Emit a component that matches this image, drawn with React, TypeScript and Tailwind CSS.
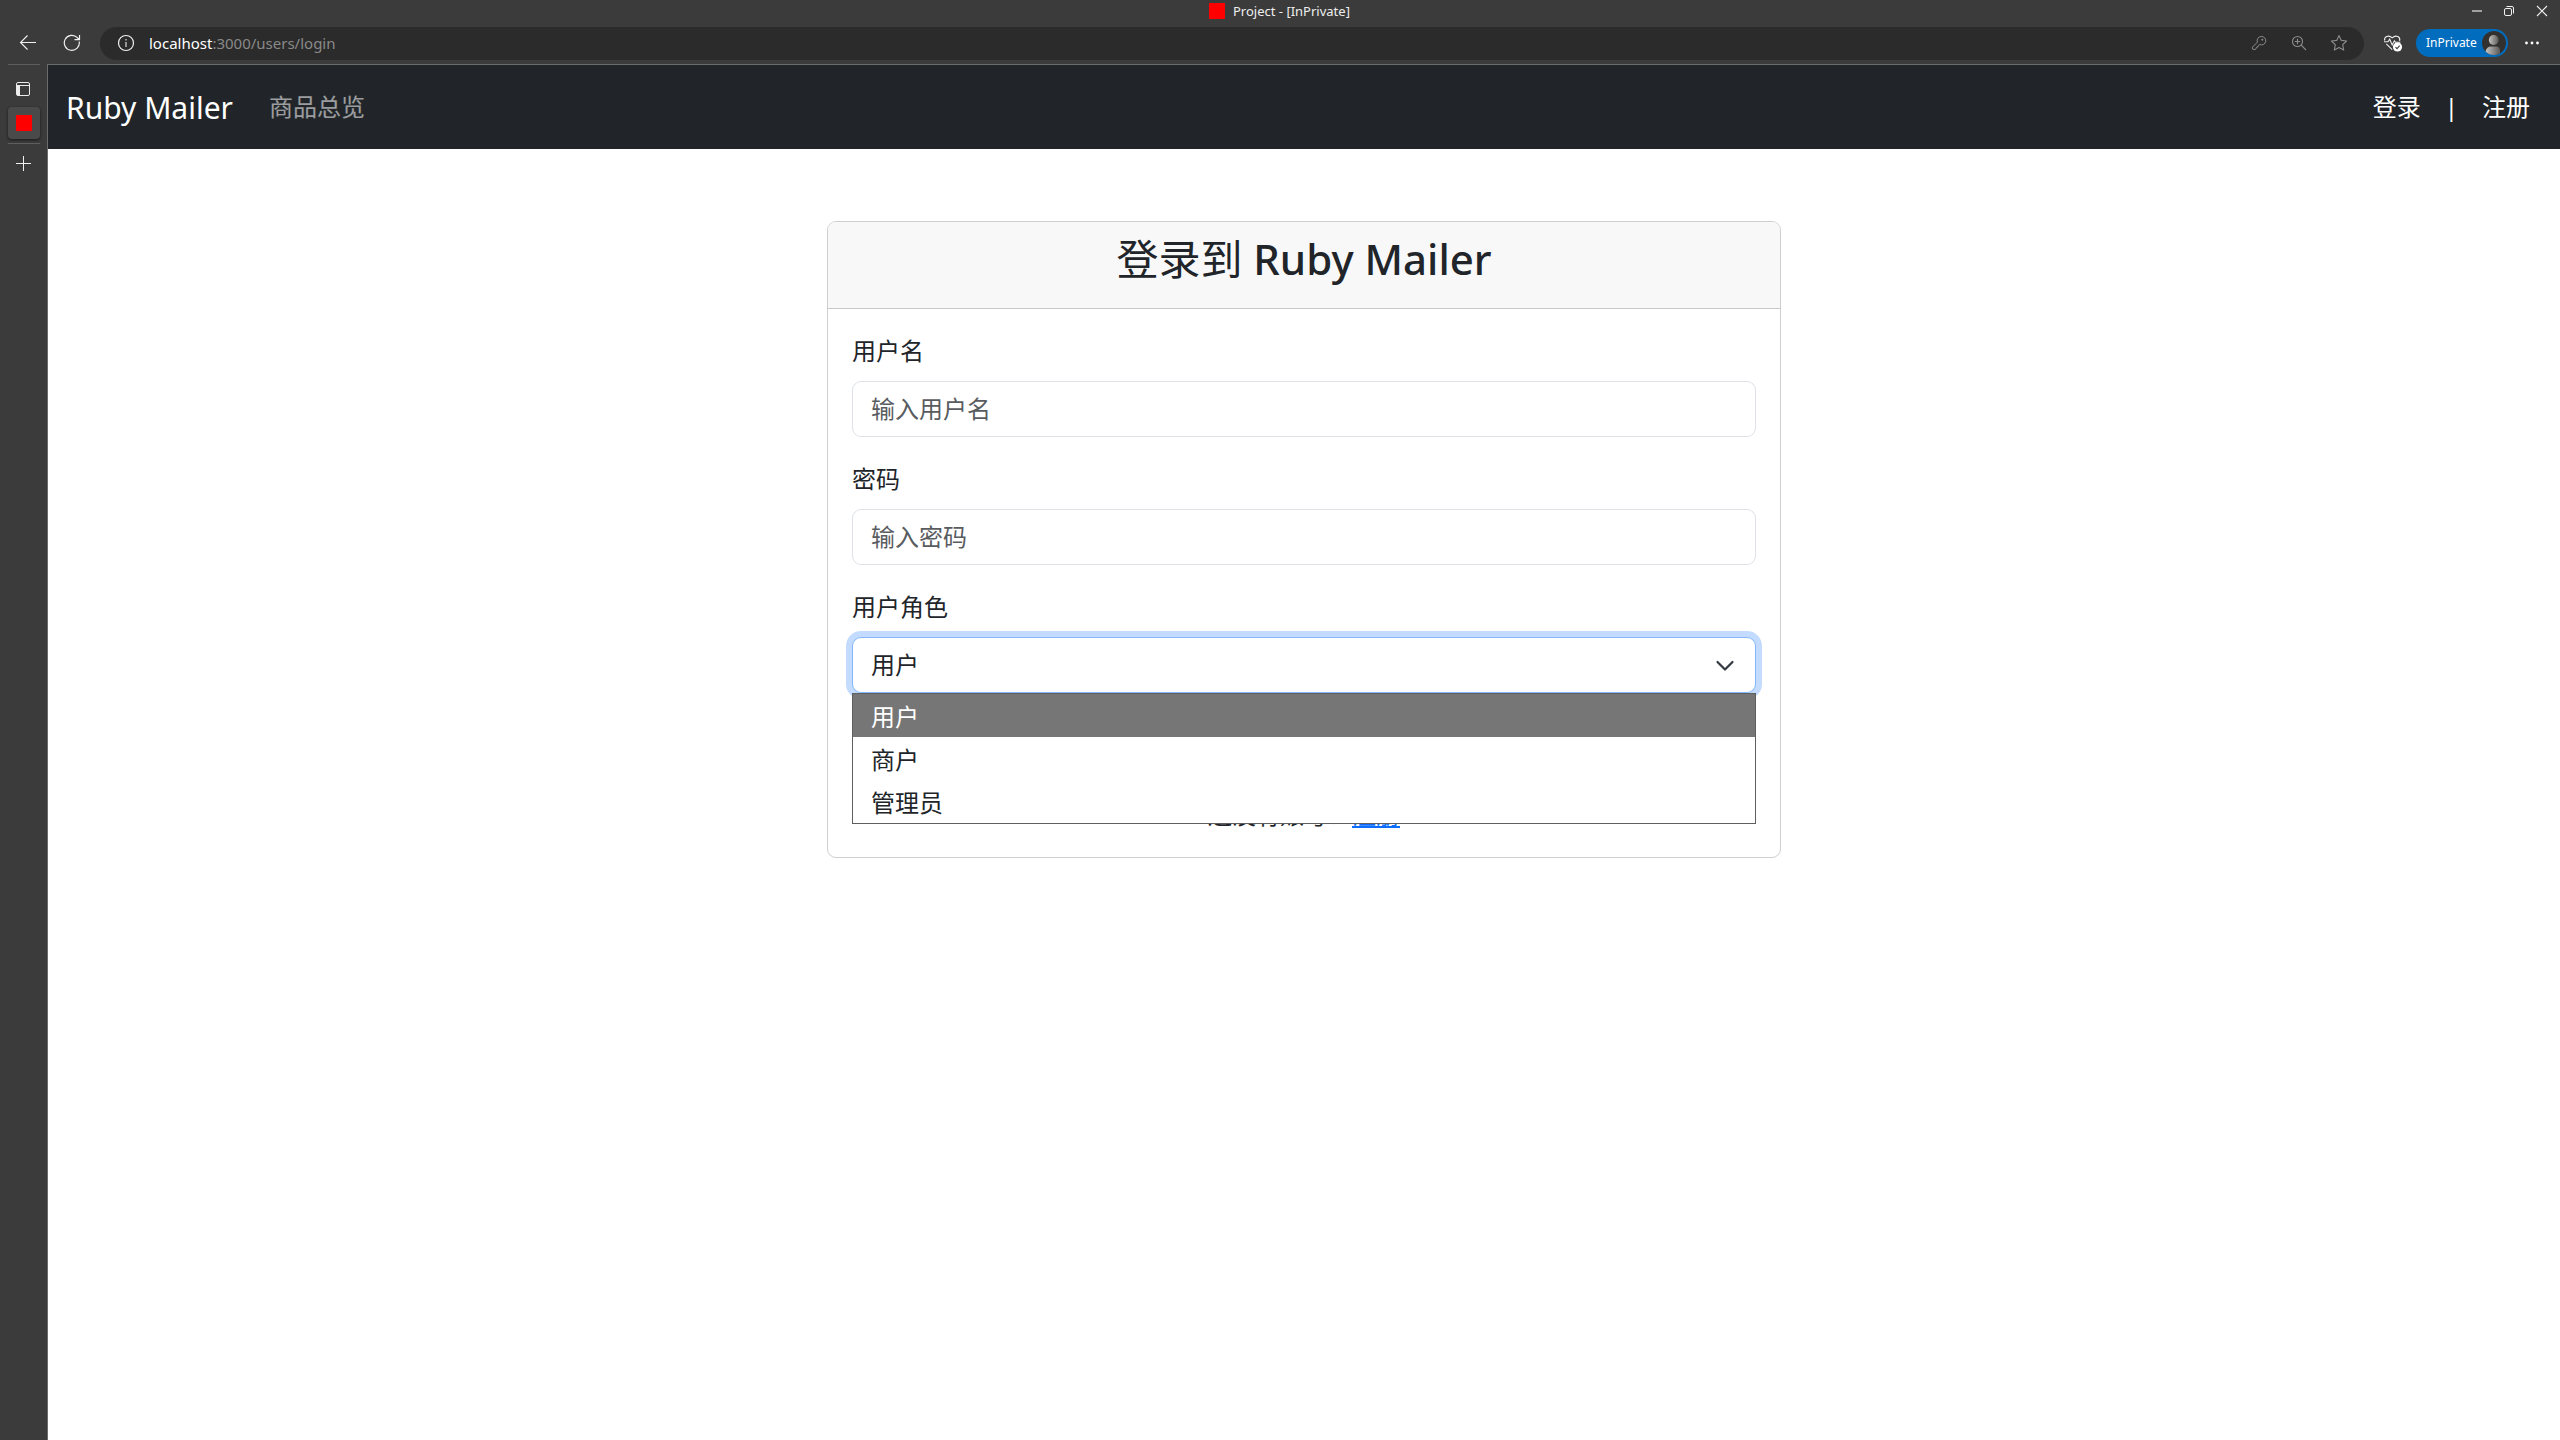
import type { ReactNode } from 'react';

const UI_FONT = "font-['Noto_Sans','Noto_Sans_CJK_SC',sans-serif]";

function TitleBar() {
  return (
    <div className="flex h-[27px] w-full shrink-0 items-start">
      <div className="ml-[1209px] mt-[3px] size-4 bg-[#ff0000]" />
      <span className="ml-2 mt-[2px] text-[13px] leading-[18px] text-[#eeeeee]">Project - [InPrivate]</span>
      <div className="ml-auto mr-[12px] flex">
        <svg className="mr-[20px] mt-[5px]" width="12" height="12" viewBox="0 0 12 12" fill="none">
          <path d="M1 6h10" stroke="#a0a0a0" strokeWidth="2" />
        </svg>
        <svg className="mr-[21px] mt-[5px]" width="12" height="12" viewBox="0 0 12 12" fill="none" stroke="#f0f0f0">
          <rect x="1.5" y="3.5" width="7" height="7" rx="1.5" />
          <path d="M3.5 1.5H9A1.5 1.5 0 0 1 10.500 3V8.500" />
        </svg>
        <svg className="mt-[5px]" width="12" height="12" viewBox="0 0 12 12" fill="none">
          <path d="M1 1l10 10M11 1L1 11" stroke="#f0f0f0" strokeWidth="1.100" />
        </svg>
      </div>
    </div>
  );
}

function Toolbar() {
  return (
    <div className="flex h-[37px] w-full shrink-0 items-start">
      <svg className="ml-[19px] mt-[7px]" width="18" height="18" viewBox="0 0 18 18" fill="none" stroke="#f0f0f0" strokeWidth="1.100">
        <path d="M17 8.500H1.500M8.500 1.500L1.500 8.500l7 7" />
      </svg>
      <svg className="ml-[26px] mt-[7px]" width="18" height="18" viewBox="0 0 18 18" fill="none" stroke="#f0f0f0" strokeWidth="1.200">
        <path d="M16.200 7.500A7.500 7.500 0 1 1 14.300 3.700L16 5.500M16.500 1v4.700h-5" />
      </svg>
      <div className="ml-[19px] flex h-[33px] w-[2264px] items-center rounded-full bg-[#2b2b2b]">
        <svg className="mb-px ml-[17px]" width="18" height="18" viewBox="0 0 18 18" fill="none" stroke="#f0f0f0">
          <circle cx="9" cy="9" r="7.500" strokeWidth="1.200" />
          <path d="M9 8v5M9 5v1.600" stroke="#b0b0b0" strokeWidth="1.600" />
        </svg>
        <span className="mb-px ml-[14px] text-[15px] leading-5 text-[#898989]">
          <span className="text-white">localhost</span>:3000/users/login
        </span>
        <svg className="mb-px ml-auto mr-[24px]" width="16" height="16" viewBox="0 0 16 16" fill="none" stroke="#8c8c8c" strokeLinejoin="round">
          <path d="M10.300 1.500a4.200 4.200 0 1 1-1.500 8L7.500 10.300l-.4 1.500-1.300.3-.8 1.700-1.200.8-2.100-.4-.3-2L6.400 7.200A4.200 4.200 0 0 1 10.300 1.500z" />
          <circle cx="11.300" cy="4.700" r=".6" fill="#8c8c8c" />
        </svg>
        <svg className="mb-px mr-[23px]" width="16" height="16" viewBox="0 0 16 16" fill="none" stroke="#8c8c8c" strokeWidth="1.100">
          <circle cx="6.500" cy="6.500" r="5" />
          <path d="M10.200 10.200L15 15M6.500 3.800v5.400M3.800 6.500h5.400" />
        </svg>
        <svg className="mb-px mr-[16px]" width="18" height="18" viewBox="0 0 18 18" fill="none" stroke="#8c8c8c" strokeWidth="1.100" strokeLinejoin="round">
          <path d="M9 1.500l2.300 4.900 5.300.6-3.900 3.700 1 5.400L9 13.500l-4.700 2.600 1-5.400L1.400 7l5.300-.6z" />
        </svg>
      </div>
      <svg className="ml-[19px] mt-[7px]" width="20" height="19" viewBox="0 0 20 19" fill="none" stroke="#ececec" strokeWidth="1.100">
        <path d="M1.700 6.500C.8 3 5.500.2 9.200 3.800 13 .2 17.700 3 16.600 6.800M3.300 9.800l5.900 5.800" />
        <path d="M1 7.800h4l1.700-2.600L9.200 11l2.200-4.200 1 1.500h5" />
        <circle cx="14.500" cy="13" r="4.600" fill="#ffffff" stroke="none" />
        <path d="M12.500 13.200l1.500 1.400 2.700-2.900" stroke="#3b3b3b" />
      </svg>
      <div className="ml-[13px] mt-[2px] flex h-7 w-[92px] items-center justify-between rounded-full bg-[#006cbe] pl-[10px] pr-[2px]">
        <span className="text-[12px] leading-4 text-white">InPrivate</span>
        <svg width="24" height="24" viewBox="0 0 24 24">
          <defs>
            <clipPath id="avatar-clip">
              <circle cx="12" cy="12" r="12" />
            </clipPath>
            <linearGradient id="avatar-fill" x1="0" x2="1">
              <stop offset="0" stopColor="#c4c4c4" />
              <stop offset="1" stopColor="#5c5a58" />
            </linearGradient>
          </defs>
          <circle cx="12" cy="12" r="12" fill="#33312f" />
          <g clipPath="url(#avatar-clip)" fill="url(#avatar-fill)">
            <circle cx="11.700" cy="9" r="4.900" />
            <path d="M3.500 24v-3.500C4 17.500 6 15.500 9 15.500h5c2.500 0 4 1.500 4 4V24z" />
          </g>
        </svg>
      </div>
      <svg className="ml-[16px] mt-[14px]" width="16" height="4" viewBox="0 0 16 4" fill="#ffffff">
        <circle cx="2.500" cy="2" r="1.400" />
        <circle cx="8" cy="2" r="1.400" />
        <circle cx="13.500" cy="2" r="1.400" />
      </svg>
    </div>
  );
}

function TabRail() {
  return (
    <aside className="flex w-[47px] shrink-0 flex-col pl-2">
      <div className="h-px w-8 bg-[#5e5e5e]" />
      <svg className="ml-2 mt-[17px]" width="14" height="14" viewBox="0 0 14 14" fill="none" stroke="#ececec">
        <rect x=".5" y=".5" width="13" height="13" rx="1.500" />
        <path d="M.5 3.500h13" />
        <path d="M1 4h3v9.500H1z" fill="#ececec" stroke="none" />
      </svg>
      <div className="mt-[11px] flex size-8 items-center justify-center rounded bg-[#4a4a4a] shadow-[0_1px_3px_rgba(0,0,0,0.6)]">
        <div className="size-4 bg-[#ff0000]" />
      </div>
      <div className="mt-1 h-px w-8 bg-[#5e5e5e]" />
      <svg className="ml-2 mt-[12px]" width="15" height="15" viewBox="0 0 15 15" fill="none" stroke="#f0f0f0">
        <path d="M7.500 0v15M0 7.500h15" />
      </svg>
    </aside>
  );
}

function Navbar() {
  return (
    <nav className="flex h-[84px] items-center bg-[#212529] pl-[18px] pr-[30px] text-[24px] text-white">
      <span className="text-[30px] leading-[45px]">Ruby Mailer</span>
      <span className="ml-[36px] leading-9 text-white/55">商品总览</span>
      <div className="ml-auto flex items-center leading-9">
        <span>登录</span>
        <span className="mx-[24px]">|</span>
        <span>注册</span>
      </div>
    </nav>
  );
}

function Field({ label, children }: { label: string; children: ReactNode }) {
  return (
    <div className="mb-6">
      <div className="mb-3 leading-9">{label}</div>
      {children}
    </div>
  );
}

function TextInput({ placeholder, type }: { placeholder: string; type: string }) {
  return (
    <input
      type={type}
      placeholder={placeholder}
      className="block h-14 w-full rounded-[9px] border border-[#dee2e6] bg-white px-[18px] pb-[10px] pt-[8px] leading-9 placeholder:text-[#595c5f]"
    />
  );
}

function RoleSelect() {
  return (
    <div className="relative">
      <div className="flex h-14 items-center justify-between rounded-[9px] border border-[#86b7fe] bg-white pl-[18px] pr-[18px] leading-9 shadow-[0_0_0_6px_#c2dbff]">
        <span>用户</span>
        <svg className="mb-px" width="24" height="18" viewBox="0 0 16 12" fill="none" stroke="#343a40" strokeWidth="1.500" strokeLinecap="round" strokeLinejoin="round">
          <path d="M3 4l5 5 5-5" />
        </svg>
      </div>
      <ul className="absolute left-0 top-full z-10 w-full border border-[#5f5f5f] bg-white leading-[42px]">
        <li className="h-[43px] bg-[#767676] pl-[18px] pt-[2px] text-white">用户</li>
        <li className="h-[43px] pl-[18px] pt-[2px]">商户</li>
        <li className="h-[43px] pl-[18px] pt-[2px]">管理员</li>
      </ul>
    </div>
  );
}

function LoginCard() {
  return (
    <section className="mx-auto mt-[72px] h-[637px] w-[954px] overflow-hidden rounded-[9px] border border-[#cfcfcf] bg-white text-[24px] text-[#212529]">
      <header className="h-[87px] border-b border-[#c8c8c8] bg-[#f8f8f8] pt-3 text-center">
        <h3 className="text-[42px] font-medium leading-[50px]">
          <span className="font-normal">登录到</span> Ruby Mailer
        </h3>
      </header>
      <div className="p-6">
        <Field label="用户名">
          <TextInput type="text" placeholder="输入用户名" />
        </Field>
        <Field label="密码">
          <TextInput type="password" placeholder="输入密码" />
        </Field>
        <Field label="用户角色">
          <RoleSelect />
        </Field>
        <button className="block h-14 w-full rounded-[9px] bg-[#0d6efd] leading-9 text-white">登录</button>
        <p className="mt-6 text-center leading-9">
          还没有账号？<a className="text-[#0d6efd] underline" href="#register">注册</a>
        </p>
      </div>
    </section>
  );
}

export default function App() {
  return (
    <div className={`flex h-[1440px] w-[2560px] flex-col overflow-hidden bg-[#3b3b3b] ${UI_FONT}`} lang="zh-CN">
      <TitleBar />
      <Toolbar />
      <div className="flex min-h-0 flex-1">
        <TabRail />
        <main className="min-w-0 flex-1 border-l border-t border-[#6b6b6b] bg-white">
          <Navbar />
          <LoginCard />
        </main>
      </div>
    </div>
  );
}
